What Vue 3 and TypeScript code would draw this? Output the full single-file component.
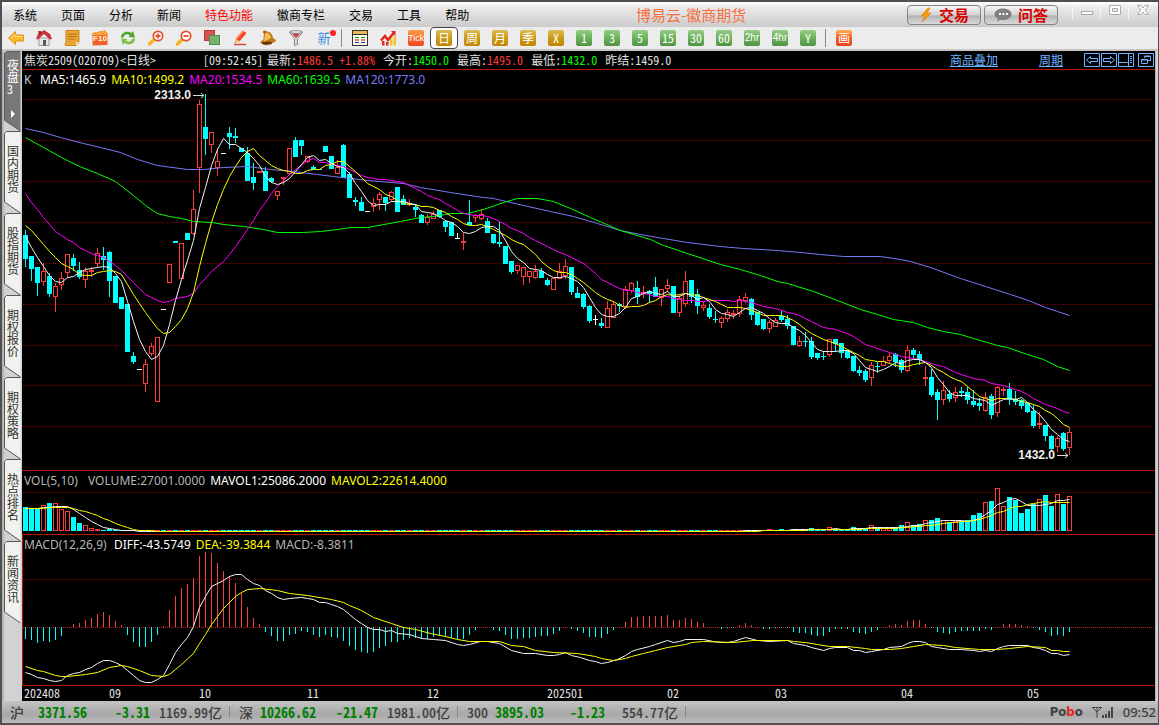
<script setup lang="ts">
type Kind = 'd' | 'u' | 'w'
interface Candle { kind: Kind; x: number; high: number; top: number; bottom: number; low: number; close: number }
interface Quote { label: string; value: string; tone: string }

const LEFT = 22
const WIDTH = 1133
const STEP = 6
const xOf = (i: number): number => 25 + i * STEP

const rawCandles = `d230,235,259,267 d256,256,269,281 d267,267,283,296 u263,271,282,286 d273,276,294,297 u283,286,297,312 u272,278,285,290 u254,254,273,277 d254,258,266,271 d262,270,277,279
u267,271,280,288 u267,270,272,277 u248,253,264,267 d247,256,260,270 d251,252,281,297 d276,276,303,303 d297,297,309,309 d304,304,352,352 d352,356,362,364 w369,369,370,370
u359,364,384,392 u343,346,354,356 u337,337,402,402 w309,309,310,310 u264,264,283,283 d241,241,243,243 u243,243,279,279 d233,233,240,240 u190,209,234,235 u100,104,168,193
d94,127,139,155 u132,132,145,153 u148,161,168,176 w153,153,154,154 d127,133,137,149 d128,136,138,143 d148,148,152,152 d147,153,181,181 d163,177,183,190 u171,171,173,173
d167,171,191,191 d177,178,182,183 u191,191,196,200 u177,177,179,185 u148,148,174,174 d137,140,157,157 d140,140,146,155 u156,156,162,163 d165,167,170,170 d169,169,170,170
d146,146,152,152 d156,156,169,169 u160,167,174,174 d144,145,178,178 d172,174,198,198 d197,200,202,206 d197,202,211,211 w211,211,212,212 u198,203,207,212 u192,194,200,210
d197,197,203,211 u191,192,200,202 d187,187,212,212 d195,199,205,205 u199,203,205,206 d205,207,210,217 d214,215,223,223 u214,217,223,225 u211,214,219,219 d210,210,217,218
d220,221,227,232 d222,222,236,236 w233,238,239,239 u233,241,243,250 d200,222,225,225 u214,215,218,222 u209,214,219,220 d218,221,233,233 d234,234,243,244 d222,242,244,247
d246,246,264,264 d261,261,272,274 u265,265,271,274 u267,267,277,285 u271,271,277,283 u265,271,278,279 d268,271,278,278 d278,280,285,286 u278,278,290,290 u263,271,279,279
u259,266,276,279 d267,267,292,295 d287,293,298,298 d293,294,307,309 d305,306,321,323 w315,319,320,325 d318,323,326,328 u301,308,328,328 u301,304,318,318 d303,304,306,312
u286,289,307,309 u282,283,291,293 d281,288,297,304 u286,292,294,298 d290,291,294,303 d277,287,297,297 u289,289,298,306 u279,285,289,292 d286,286,313,313 u295,298,313,317
u271,281,304,307 d280,280,297,303 d289,294,306,314 u302,305,308,311 d304,308,317,319 d311,319,320,323 u316,318,323,328 u309,312,319,322 u310,313,315,319 u296,299,314,317
u293,297,301,303 d298,299,315,320 d312,312,325,326 d319,319,329,330 u320,322,329,333 u318,320,327,327 d311,316,320,322 d315,319,326,329 d326,326,345,346 u336,341,346,347
d332,341,342,347 d337,341,357,359 d353,353,358,360 d351,356,357,360 u339,339,355,357 d339,339,344,352 d343,343,353,358 d350,350,358,359 d356,356,371,372 d366,370,373,376
d369,371,380,382 u362,365,378,386 d362,366,367,373 u356,361,366,366 u353,356,361,363 d353,354,362,367 d359,360,370,373 u345,350,371,372 d348,350,355,358 d351,354,360,365
u366,377,379,386 d369,377,395,397 d389,392,400,420 u381,390,400,405 d390,394,399,402 u387,392,398,402 d387,391,393,397 d387,392,400,404 d390,401,405,407 d398,403,406,411
u392,397,411,412 d394,396,415,419 u386,387,413,417 u387,389,391,396 d383,389,400,405 d391,399,402,405 d399,400,406,409 d403,403,412,413 d405,411,426,428 u412,423,425,429
d425,425,436,441 d435,436,449,450 u436,438,447,452 d432,433,449,451 u428,432,448,455`

const candles: Candle[] = rawCandles.trim().split(/\s+/).map((t, i) => {
  const kind = t[0] as Kind
  const [high, top, bottom, low] = t.slice(1).split(',').map(Number)
  return { kind, x: xOf(i), high, top, bottom, low, close: kind === 'd' ? bottom : top }
})

function average(values: number[], n: number, lead: number[]): number[] {
  return values.map((_, i) => {
    if (i < n - 1) return lead[i]
    let s = 0
    for (let k = i - n + 1; k <= i; k++) s += values[k]
    return Math.round(s / n)
  })
}
const seriesLine = (v: number[]): string => v.map((y, i) => `${xOf(i) + 0.5},${y + 0.5}`).join(' ')
const tracedLine = (s: string): string =>
  s.trim().split(/\s+/).map((p) => p.split(',').map((n) => Number(n) + 0.5).join(',')).join(' ')

const closes = candles.map((c) => c.close)
const priceLines = [
  { tone: 'ma120', points: tracedLine('25,128 43,132 60,137 83,143 100,147 120,152 137,159 157,165 187,169 203,169 223,167 247,166 270,169 293,171 317,174 333,176 350,178 367,180 403,183 420,187 450,192 483,197 493,198 523,205 550,211 573,216 597,223 620,230 640,234 663,238 687,242 720,246 743,248 777,250 800,252 820,254 843,256 880,256 900,259 910,261 930,267 960,278 985,286 1010,294 1028,300 1045,307 1057,311 1069,315') },
  { tone: 'ma60', points: tracedLine('25,137 43,147 61,157 79,166 97,173 115,181 133,195 145,205 157,213 169,216 181,218 193,221 212,222 223,224 243,226 263,229 277,232 302,232 320,231 337,229 350,227 367,227 400,221 420,217 433,216 450,213 467,213 483,209 503,202 517,198 537,198 553,201 570,208 590,217 620,230 650,239 663,245 687,253 720,264 740,269 760,275 777,281 787,283 813,291 837,300 860,309 877,314 893,319 913,322 927,327 943,331 960,334 973,338 997,345 1007,347 1027,354 1043,359 1057,366 1069,370') },
  { tone: 'ma20', points: seriesLine(average(closes, 20, [193, 202, 209, 217, 224, 231, 235, 239, 242, 247, 250, 253, 255, 257, 261, 265, 270, 276, 282])) },
  { tone: 'ma10', points: seriesLine(average(closes, 10, [225, 230, 237, 244, 251, 257, 263, 266, 269])) },
  { tone: 'ma5', points: seriesLine(average(closes, 5, [236, 247, 257, 266])) },
]
const priceGrid = [99, 140, 181, 222, 263, 304, 345, 385, 426]

const volHead = [507, 509, 509, 505, 503, 503, 509, 511, 517, 523, 525, 528, 529, 530, 529, 530]
const volTail = [529, 530, 529, 530, 529, 529, 530, 528, 529, 529, 527, 529, 529, 529, 527, 528, 528, 525, 528, 528, 528, 527, 525, 522, 525, 524, 520, 520, 518, 520, 522, 521, 521, 520, 515, 513, 502, 501, 488, 506, 497, 500, 513, 509, 504, 499, 495, 506, 494, 504, 496]
const volumeTops = candles.map((_, i) => {
  if (i < volHead.length) return volHead[i]
  if (i >= 124) return volTail[i - 124]
  return i < 118 ? 531 : 530
})
const volumeBars = candles.map((c, i) => ({ kind: c.kind, x: c.x, y: Math.min(530, volumeTops[i]) }))
const volumeLines = [
  { tone: 'ma5', points: seriesLine(average(volumeTops, 5, [508, 508, 508, 507])) },
  { tone: 'ma10', points: seriesLine(average(volumeTops, 10, [508, 508, 508, 508, 507, 507, 507, 507, 508])) },
]

const histogram = [
  639, 640, 643, 641, 642, 640, 636, 627, 624, 623, 620, 618, 614, 612, 615, 621, 625, 635, 642, 647, 647, 642, 635, 626, 610, 596, 588, 584, 578, 556,
  552, 553, 563, 571, 576, 583, 593, 607, 618, 624, 632, 636, 641, 641, 635, 634, 631, 632, 635, 637, 635, 637, 638, 641, 646, 650, 652, 653, 652, 648,
  646, 642, 642, 640, 638, 638, 639, 639, 637, 636, 637, 638, 639, 639, 635, 630, 627, 627, 630, 631, 635, 639, 639, 638, 638, 637, 636, 636, 634, 631,
  627, 629, 631, 633, 637, 637, 638, 634, 630, 627, 622, 617, 617, 616, 616, 616, 616, 615, 620, 620, 618, 619, 622, 623, 627, 627, 629, 628, 628, 625,
  623, 625, 627, 629, 629, 628, 628, 628, 632, 633, 633, 635, 636, 636, 632, 629, 629, 629, 632, 633, 634, 632, 630, 627, 625, 624, 625, 621, 620, 620,
  624, 628, 632, 633, 634, 632, 631, 631, 631, 631, 629, 630, 627, 624, 624, 624, 625, 626, 628, 630, 632, 636, 635, 636, 632,
].map((y, i) => ({ x: xOf(i), y: Math.min(y, 627), h: Math.abs(y - 627), up: y < 627 }))
const macdLines = [
  { tone: 'ma5', points: tracedLine('25,672 31,674 37,677 43,678 49,680 55,681 61,680 67,675 73,673 79,672 85,669 91,667 97,663 103,660 109,660 115,662 121,665 127,670 133,675 139,680 145,682 151,682 157,679 163,675 169,664 175,652 181,644 187,637 193,626 199,607 205,596 211,586 217,583 223,580 229,576 235,574 241,574 247,579 253,583 259,585 265,590 271,593 277,597 283,599 289,598 301,597 307,598 313,599 319,602 325,602 331,604 337,606 343,609 349,614 355,619 361,623 367,627 373,629 379,629 385,631 391,630 397,633 409,634 415,636 421,638 433,639 445,640 457,644 463,645 469,644 480,641 487,641 499,643 511,650 523,653 535,653 547,655 553,655 559,654 565,652 571,655 580,657 589,660 595,661 601,663 607,662 617,659 625,655 631,651 637,649 649,646 655,644 667,640 673,642 679,641 685,639 703,639 713,641 721,642 727,642 733,641 745,637 757,640 769,641 787,640 793,643 805,645 811,647 823,650 829,648 835,647 847,647 853,650 859,650 865,652 871,651 883,649 889,647 901,646 907,643 913,641 919,641 925,642 931,646 937,647 949,649 961,649 973,650 979,651 985,650 991,651 997,648 1003,646 1009,645 1027,645 1033,647 1039,648 1045,650 1051,653 1057,653 1063,655 1069,654') },
  { tone: 'ma10', points: tracedLine('25,666 37,670 43,671 55,675 61,676 67,676 85,674 97,672 109,667 121,665 127,666 139,670 151,675 163,676 169,674 175,669 181,664 193,653 199,643 205,634 211,624 223,608 235,596 241,592 247,589 260,588 277,590 289,593 307,595 331,599 343,602 349,605 361,610 373,617 391,623 403,627 415,629 430,633 445,636 457,639 469,641 499,641 511,645 523,646 535,650 553,652 577,653 595,656 601,658 613,660 625,658 631,656 643,653 655,650 667,647 685,644 691,642 703,641 733,642 753,640 787,640 793,641 805,642 817,644 829,646 847,646 865,648 871,649 889,649 901,648 913,646 925,644 943,645 955,647 979,649 997,649 1009,648 1027,646 1045,647 1051,650 1057,650 1063,651 1069,651') },
]

const tickStarts: [string, number][] = [['202408', 24], ['09', 109], ['10', 199], ['11', 307], ['12', 427], ['202501', 547], ['02', 667], ['03', 775], ['04', 901], ['05', 1027]]
const ticks = tickStarts.map(([label, x], i) => {
  const next = i + 1 < tickStarts.length ? tickStarts[i + 1][1] : LEFT + WIDTH
  return { label, width: `${((next - x) / (WIDTH - 2)) * 100}%` }
})

const menus = ['系统', '页面', '分析', '新闻', '特色功能', '徽商专栏', '交易', '工具', '帮助']
const periods = [
  { t: 'Tick', c: 'tick' }, { t: '日', c: 'gold' }, { t: '周', c: 'gold' }, { t: '月', c: 'gold' }, { t: '季', c: 'gold' }, { t: 'X', c: 'gold' },
  { t: '1', c: 'green' }, { t: '3', c: 'green' }, { t: '5', c: 'green' }, { t: '15', c: 'green' }, { t: '30', c: 'green' }, { t: '60', c: 'green' },
  { t: '2hr', c: 'green small' }, { t: '4hr', c: 'green small' }, { t: 'Y', c: 'green' },
]
const sideTabs = ['夜盘3', '国内期货', '股指期货', '期权报价', '期权策略', '热点排名', '新闻资讯']
const quotes: Quote[] = [
  { label: '今开:', value: '1450.0', tone: 'fall' },
  { label: '最高:', value: '1495.0', tone: 'rise' },
  { label: '最低:', value: '1432.0', tone: 'fall' },
  { label: '昨结:', value: '1459.0', tone: 'flat' },
]
const pct = (v: number, base: number, size: number): string => `${((v - base) / size) * 100}%`
</script>

<template>
  <div class="window">
    <header class="menubar">
      <nav class="menus">
        <button v-for="m in menus" :key="m" type="button" :class="{ hot: m === '特色功能' }">{{ m }}</button>
      </nav>
      <h1>博易云-徽商期货</h1>
      <div class="actions">
        <button type="button" class="pill">
          <svg width="14" height="16" viewBox="0 0 14 16"><path d="M9 1 2 9h4l-3 6 9-9H8l3-5z" fill="#f59a12" stroke="#e07b00" stroke-width=".6" /></svg>
          交易
        </button>
        <button type="button" class="pill">
          <svg width="18" height="14" viewBox="0 0 18 14"><path d="M9 .5c5 0 8.500 2.500 8.500 5.700S14 12 9 12c-1 0-1.600 0-2.500-.2L3 13.500l1-2.800C2 9.700.5 8 .5 6.200.5 3 4 .5 9 .5z" fill="#808080" /><path d="M5 5h2v2H5zM8.500 5h2v2h-2zM12 5h2v2h-2z" fill="#fff" /></svg>
          问答
        </button>
      </div>
      <div class="winctl">
        <button type="button" aria-label="最小化"><svg width="14" height="16"><rect x="1.500" y="8.500" width="11" height="3" fill="#fff" stroke="#aaa" /></svg></button>
        <button type="button" aria-label="最大化"><svg width="14" height="16"><path d="M1.500 2.500h11v9h-11zM4.500 5.500h5v3h-5z" fill="#fff" fill-rule="evenodd" stroke="#aaa" /></svg></button>
        <button type="button" aria-label="关闭"><svg width="14" height="16"><path d="M1.500 2.500h3.500L7 5l2-2.500h3.500L9 7l3.500 4.500H9L7 9l-2 2.500H1.500L5 7z" fill="#fff" stroke="#aaa" /></svg></button>
      </div>
    </header>

    <div class="toolbar">
      <button type="button" aria-label="后退"><svg viewBox="0 0 16 16"><path d="M.5 8 7.500 1.500V5h8v6h-8v3.500z" fill="#fbb829" stroke="#e39412" /><path d="M3 8l4-3.500V6.500h7.500" fill="none" stroke="#ffe08a" /></svg></button>
      <button type="button" aria-label="首页"><svg viewBox="0 0 16 16"><path d="M3 8h10v7.500H3z" fill="#e8e8e8" stroke="#999" /><path d="M0 9 2 4l6-4 6 4 2 5-2 .5L8 4 2 9.500z" fill="#c8323a" /><path d="M2.500 1h2.500v3H2.500z" fill="#922" /><path d="M7 10h3v5.500H7z" fill="#555" /></svg></button>
      <button type="button" aria-label="笔记"><svg viewBox="0 0 16 16"><path d="M2 .5h13V12l-3 3.500H2c-1.500 0-1.500-2.500 0-2.500z" fill="#e8a534" stroke="#c98518" /><path d="M4 4h9M4 6.500h9M4 9h7" stroke="#b87412" /><path d="M15 12h-3v3.500z" fill="#ffe0a0" /></svg></button>
      <button type="button" aria-label="F10"><svg viewBox="0 0 16 16"><path d="M.5 3 13 .5 15.500 3v12L.5 15.500z" fill="#f1612a" /><path d="M.5 3 13 .5 15 3v2H.5z" fill="#f7a23a" /></svg><span class="f10">F10</span></button>
      <button type="button" aria-label="刷新"><svg viewBox="0 0 16 16"><path d="M1 7.500C1 2.500 7 0 11.500 3L13 1l2 6.500-6.500-.5L10 5.200C7.500 3.500 4 4.500 3.500 7.500z" fill="#4da527" /><path d="M15 8.500c0 5-6 7.500-10.500 4.500L3 15 1 8.500l6.500.5L6 10.800c2.500 1.700 6 .7 6.500-2.300z" fill="#7cc243" /></svg></button>
      <button type="button" aria-label="放大"><svg viewBox="0 0 16 16"><path d="M6 9.500 1.500 14" stroke="#f7b51c" stroke-width="3.500" stroke-linecap="round" /><circle cx="10" cy="6" r="4.700" fill="#fff" stroke="#e2502e" stroke-width="1.700" /><path d="M7.500 6h5M10 3.500v5" stroke="#e2502e" stroke-width="1.800" /></svg></button>
      <button type="button" aria-label="缩小"><svg viewBox="0 0 16 16"><path d="M6 9.500 1.500 14" stroke="#f7b51c" stroke-width="3.500" stroke-linecap="round" /><circle cx="10" cy="6" r="4.700" fill="#fff" stroke="#e2502e" stroke-width="1.700" /><path d="M7.500 6h5" stroke="#e2502e" stroke-width="1.800" /></svg></button>
      <button type="button" aria-label="叠加"><svg viewBox="0 0 16 16"><rect x=".5" y=".5" width="10" height="10" fill="#d9504d" stroke="#b93a38" /><rect x="5.500" y="5.500" width="10" height="9" fill="#77b36c" stroke="#528f4a" /></svg></button>
      <button type="button" aria-label="画线"><svg viewBox="0 0 16 16"><path d="M2.500 13 4 9l6.500-8.500L14.500 3 8 11z" fill="#ee4a26" /><path d="M4 9 11 1" stroke="#ff9a77" stroke-width="1.500" /><path d="M2.500 13 4 9l3.500 2z" fill="#f7c77c" /><path d="M2 14.500h12" stroke="#d04a3a" stroke-width="1.500" /></svg></button>
      <button type="button" aria-label="提醒"><svg viewBox="0 0 16 16"><path d="M4 1.500C9 0 13 4 13 8l3 2-1 2-9 3.500-5-2-.5-2 3-2z" fill="#c57a18" /><path d="M5 3c3-1 5 1 6 5l-7 4z" fill="#f3bf58" /><ellipse cx="7" cy="13" rx="5" ry="1.500" fill="#6b3207" /><circle cx="4.500" cy="2" r="1.500" fill="#a55c0e" /></svg></button>
      <button type="button" aria-label="筛选"><svg viewBox="0 0 16 16"><path d="M1.500 2h13L9.500 8.500v6l-3 1v-7z" fill="#ddd" stroke="#888" /><path d="M4 3.500h8L8 8z" fill="#d7323a" /><ellipse cx="8" cy="2" rx="6.500" ry="1.300" fill="#f1f1f1" stroke="#888" /></svg></button>
      <button type="button" class="new">新<i></i></button>
      <span class="sep"></span>
      <button type="button" aria-label="报价"><svg viewBox="0 0 16 16"><rect x=".5" y=".5" width="15" height="15" fill="#fffef0" stroke="#333" /><path d="M1 1h14v3H1z" fill="#e8bb50" /><path d="M1 4.500h14" stroke="#333" /><path d="M3 7.500h4" stroke="#090" /><path d="M9 7.500h4" stroke="#090" /><path d="M3 10h4" stroke="#c00" /><path d="M9 10h4" stroke="#c00" /><path d="M3 12.500h4M9 12.500h4" stroke="#22c" /></svg></button>
      <button type="button" aria-label="走势"><svg viewBox="0 0 16 16"><path d="M2 11h2.500v4.500H2zM6 12h2.500v3.500H6z" fill="#e22b20" /><path d="M10 9h2.500v6.500H10zM13.500 6H16v9.500h-2.500z" fill="#f6c12c" /><path d="M1 10.500 5 6l3 4 6.500-8" fill="none" stroke="#e1251b" stroke-width="2.500" /><path d="M11 1h4.500v5z" fill="#e1251b" /></svg></button>
      <button v-for="p in periods" :key="p.t" type="button" :class="{ on: p.t === '日' }"><span class="chip" :class="p.c">{{ p.t }}</span></button>
      <span class="sep"></span>
      <button type="button"><span class="chip draw">画</span></button>
    </div>

    <div class="body">
      <nav class="side">
        <button v-for="(s, i) in sideTabs" :key="s" type="button" :class="{ active: i === 0 }">
          <svg viewBox="0 0 17 82" preserveAspectRatio="none"><path d="M16.500.5h-14l-2 2V71l16 11" /></svg>
          <span>{{ s }}</span>
          <b v-if="i === 0"></b>
        </button>
      </nav>

      <main class="board">
        <div class="infobar">
          <span class="name">焦炭2509(020709)&lt;日线&gt;</span>
          <span class="time">[09:52:45]</span>
          <span class="last">最新:<em class="rise">1486.5&nbsp;+1.88%</em></span>
          <span v-for="q in quotes" :key="q.label">{{ q.label }}<em :class="q.tone">{{ q.value }}</em></span>
          <span class="links">
            <a href="#overlay">商品叠加</a>
            <a href="#period">周期</a>
          </span>
          <span class="tools">
            <button type="button" aria-label="左移"><svg viewBox="0 0 16 14"><path d="M.5.5h15v13H.5zM2.500 7 6.500 3.500v2h7v3h-7v2z" /></svg></button>
            <button type="button" aria-label="右移"><svg viewBox="0 0 16 14"><path d="M.5.5h15v13H.5zM13.500 7 9.500 3.500v2h-7v3h7v2z" /></svg></button>
            <button type="button" aria-label="侧栏"><svg viewBox="0 0 16 14"><path d="M.5.5h15v13H.5zM.500 9.500h9M10.500 1v12M12 3.500h2M12 5.500h2M12 7.500h2M12 9.500h2" /></svg></button>
            <button type="button" class="restore" aria-label="还原"><svg viewBox="0 0 16 14"><path d="M.5.5h15v13H.5zM6.500 5V3.500h6v4H10M6.500 3h6M3.500 6.500h6v4h-6zM3.500 7h6" /></svg></button>
          </span>
        </div>

        <section class="panel price">
          <svg class="plot" viewBox="22 70 1133 400" preserveAspectRatio="none">
            <line v-for="y in priceGrid" :key="y" class="grid" x1="22" x2="1155" :y1="y + 0.5" :y2="y + 0.5" />
            <g v-for="c in candles" :key="c.x" :class="c.kind">
              <rect v-if="c.low > c.high" :x="c.x" :y="c.high" width="1" :height="c.low - c.high" />
              <rect :x="c.x - 2" :y="c.top" width="5" :height="c.bottom - c.top" />
              <rect v-if="c.kind === 'u' && c.bottom - c.top > 2" class="hole" :x="c.x - 1" :y="c.top + 1" width="3" :height="c.bottom - c.top - 2" />
            </g>
            <polyline v-for="l in priceLines" :key="l.tone" :class="l.tone" :points="l.points" />
          </svg>
          <p class="legend">
            <span class="key">K</span><span class="white">MA5:1465.9</span><span class="yellow">MA10:1499.2</span><span class="magenta">MA20:1534.5</span><span class="lime">MA60:1639.5</span><span class="blue">MA120:1773.0</span>
          </p>
          <span class="mark" :style="{ right: pct(1155, 205, 1133), top: pct(95, 70, 400) }">2313.0<svg width="12" height="7"><path d="M0 3.500h11M8 1l3 2.500L8 6" /></svg></span>
          <span class="mark" :style="{ right: pct(1155, 1069, 1133), top: pct(455, 70, 400) }">1432.0<svg width="12" height="7"><path d="M0 3.500h11M8 1l3 2.500L8 6" /></svg></span>
        </section>

        <section class="panel volume">
          <svg class="plot" viewBox="22 471 1133 63" preserveAspectRatio="none">
            <line class="grid" x1="22" x2="1155" y1="492.500" y2="492.500" />
            <g v-for="b in volumeBars" :key="b.x" :class="b.kind === 'u' ? 'u' : 'd'">
              <rect :x="b.x - 2" :y="b.y" width="5" :height="531 - b.y" />
              <rect v-if="b.kind === 'u' && b.y < 529" class="hole" :x="b.x - 1" :y="b.y + 1" width="3" :height="529 - b.y" />
            </g>
            <polyline v-for="l in volumeLines" :key="l.tone" :class="l.tone" :points="l.points" />
          </svg>
          <p class="legend"><span class="dim">VOL(5,10)</span><span class="dim">VOLUME:27001.0000</span><span class="white">MAVOL1:25086.2000</span><span class="yellow">MAVOL2:22614.4000</span></p>
        </section>

        <section class="panel macd">
          <svg class="plot" viewBox="22 535 1133 150" preserveAspectRatio="none">
            <line class="grid" x1="22" x2="1155" y1="579.500" y2="579.500" />
            <line class="grid zero" x1="22" x2="1155" y1="627.500" y2="627.500" />
            <rect v-for="h in histogram" :key="h.x" :class="h.up ? 'rose' : 'cyan'" :x="h.x" :y="h.y" width="1" :height="h.h" />
            <polyline v-for="l in macdLines" :key="l.tone" :class="l.tone" :points="l.points" />
          </svg>
          <p class="legend"><span class="dim">MACD(12,26,9)</span><span class="white">DIFF:-43.5749</span><span class="yellow">DEA:-39.3844</span><span class="dim">MACD:-8.3811</span></p>
        </section>

        <div class="axis"><span v-for="t in ticks" :key="t.label" :style="{ width: t.width }">{{ t.label }}</span></div>
      </main>
    </div>

    <footer class="status">
      <div class="index"><span>沪</span><b class="w1">3371.56</b><b class="w2">-3.31</b><span>1169.99亿</span></div>
      <div class="index"><span>深</span><b class="w1">10266.62</b><b class="w2">-21.47</b><span>1981.00亿</span></div>
      <div class="index"><span>300</span><b class="w1">3895.03</b><b class="w2">-1.23</b><span>554.77亿</span></div>
      <div class="tray">
        <strong>Po<i>b</i>o</strong>
        <svg width="22" height="13"><path d="M0 1.500h10M1 2l4 4 4-4M5 1v11" /><path d="M10 9h2v3h-2zM13 8h2v4h-2zM16 5h2v7h-2zM19 1h2v11h-2z" class="bars" /></svg>
        <time>09:52</time>
      </div>
    </footer>
  </div>
</template>

<style>
html, body { margin: 0; height: 100%; background: #c8c8c8; }
</style>

<style scoped>
* { box-sizing: border-box; }
button { margin: 0; padding: 0; border: 0; background: none; font: inherit; color: inherit; cursor: pointer; }
em, i { font-style: normal; }
.window { min-height: 100vh; display: flex; flex-direction: column; border: 2px solid #505050; border-right-width: 1px; background: #d4d4d4; color: #000; font: 12px/16px "Noto Sans CJK SC", sans-serif; }

.menubar { display: flex; align-items: center; height: 25px; padding-left: 11px; background: linear-gradient(#fff, #ebebeb 20%, #cbcbcb); }
.menus { display: flex; gap: 24px; flex: none; }
.menus button { white-space: nowrap; }
.menus .hot { color: #f00; }
h1 { flex: 1; margin: 0 0 0 6px; text-align: center; font-size: 15px; font-weight: 400; line-height: 20px; color: #f5703c; }
.actions { display: flex; gap: 3px; flex: none; }
.pill { display: flex; align-items: center; justify-content: center; gap: 6px; width: 74px; height: 20px; border: 1px solid #858585; border-radius: 4px; background: linear-gradient(#f6f6f6, #d2d2d2 50%, #b4b4b4 55%, #d8d8d8); color: #d80000; font-size: 15px; font-weight: 700; line-height: 18px; white-space: nowrap; }
.winctl { display: flex; flex: none; align-self: flex-start; margin: 1px 2px 0 14px; }
.winctl button { width: 28px; height: 16px; border-left: 1px solid #f6f6f6; }
.winctl svg { display: block; margin: 0 auto; }

.toolbar { display: flex; align-items: center; height: 22px; background: #ececec; }
.toolbar button { position: relative; display: flex; align-items: center; justify-content: center; flex: none; width: 28px; height: 22px; }
.toolbar svg { width: 16px; height: 16px; }
.f10 { position: absolute; left: 6px; right: 6px; top: 6px; text-align: center; color: #fff8d0; font: bold 8px/12px "Liberation Sans", sans-serif; }
.toolbar .new { color: #3d8fe0; font-size: 13px; }
.new i { position: absolute; right: 2px; top: 3px; width: 6px; height: 6px; border-radius: 50%; background: #f22; }
.sep { flex: none; width: 8px; height: 18px; background: linear-gradient(#888, #888) 3px 0 / 1px 100% no-repeat; }
.toolbar .on { border: 1px solid #444; border-radius: 4px; background: #fff; }
.chip { width: 16px; height: 16px; border-radius: 2px; color: #fff; font-size: 12px; line-height: 16px; text-align: center; font-feature-settings: "hwid"; }
.gold { background: linear-gradient(#dcbc58, #cb9a18 50%, #bf8600); }
.green { background: linear-gradient(#94cd84, #6db15c 50%, #509343); }
.tick { background: linear-gradient(#fb9b45, #ef4423); font: 9px/16px "Liberation Sans", sans-serif; }
.small { font: 10px/16px "Liberation Sans", sans-serif; }
.draw { background: linear-gradient(#fdb050, #f0501e 60%, #e8441a); }

.body { flex: 1; display: flex; min-height: 0; border-top: 2px solid #c8c4c4; }
.side { flex: none; width: 20px; padding: 0 1px 0 2px; background: linear-gradient(90deg, #a9a9ad, #d2d2d2 3px, #d2d2d2); }
.side button { position: relative; display: flex; flex-direction: column; align-items: flex-start; justify-content: flex-start; width: 17px; height: 82px; padding: 14px 2px 0 3px; color: #333; line-height: 12px; }
.side svg { position: absolute; inset: 0; width: 17px; height: 82px; fill: #f1f1ed; stroke: #555; }
.side span { position: relative; display: block; width: 12px; word-break: break-all; text-align: left; font-feature-settings: "hwid"; }
.side .active { height: 80px; padding-top: 8px; color: #fff; }
.side .active svg { height: 80px; fill: #787878; }
.side b { position: relative; display: block; width: 0; margin: 15px 0 0 4px; border-left: 4px solid #fff; border-top: 4px solid transparent; border-bottom: 4px solid transparent; }

.board { flex: 1; min-width: 0; display: flex; flex-direction: column; margin-right: 2px; border-right: 1px solid #b8b0b0; background: #000; color: #e0e0e0; }
.infobar { display: flex; gap: 8px; align-items: center; height: 19px; padding: 0 1px 0 2px; border-bottom: 1px solid #b41400; white-space: nowrap; font-feature-settings: "hwid"; }
.name { margin-right: 39px; }
.time { margin-right: -4px; }
.rise { color: #ff3c3c; }
.fall { color: #0f0; }
.links { display: flex; gap: 41px; margin-left: auto; margin-right: 13px; }
.links a { color: #70b4ff; }
.tools { display: flex; gap: 1px; }
.tools svg { display: block; width: 16px; height: 14px; fill: none; stroke: #70b4ff; }
.restore { margin-left: 3px; }

.panel { position: relative; border-bottom: 1px solid #b41400; }
.price { flex: 400 1 0; }
.volume { flex: 63 1 0; }
.macd { flex: 150 1 0; border-left: 1px solid #b41400; }
.plot { position: absolute; inset: 0; width: 100%; height: 100%; }
.macd .plot { left: -1px; width: calc(100% + 1px); }
.legend { position: relative; display: flex; gap: 5px; margin: 0; padding: 1px 0 0 2px; font: 12px/18px "Noto Sans", sans-serif; white-space: nowrap; }
.macd .legend { padding-left: 1px; }
.volume .legend span:first-child { min-width: 59px; }
.macd .legend span:first-child { min-width: 85px; }
.key { width: 11px; color: #c8c8d8; }
.dim { color: #b4b4b4; }
.white { color: #fff; }
.yellow { color: #ff0; }
.magenta { color: #f0f; }
.lime { color: #0f0; }
.blue { color: #7878f8; }
.grid { stroke: #800000; stroke-dasharray: 1 1; stroke-dashoffset: 1; }
.zero { stroke: #b02020; }
.d rect, .cyan { fill: #0ff; }
.u rect, .rose { fill: #ff3c3c; }
.w rect { fill: #fff; }
.u .hole { fill: #000; }
polyline { fill: none; stroke-width: 1; }
.ma5 { stroke: #f4f4f4; }
.ma10 { stroke: #ff0; }
.ma20 { stroke: #f0f; }
.ma60 { stroke: #0f0; }
.ma120 { stroke: #7878f8; }
.mark { position: absolute; display: flex; align-items: center; gap: 2px; height: 14px; margin-top: -7px; color: #f0f0f0; font: bold 12px/14px "Liberation Sans", sans-serif; }
.mark svg { fill: none; stroke: #ddd; }
.axis { display: flex; height: 15px; padding-left: 2px; line-height: 14px; font-feature-settings: "hwid"; }
.axis span { flex: none; }

.status { display: flex; align-items: center; height: 22px; padding-left: 8px; background: linear-gradient(#c4c4c4, #a8a8a8 60%, #bcbcbc); color: #404040; font-size: 14px; font-weight: 500; line-height: 20px; font-feature-settings: "hwid"; white-space: nowrap; }
.index { display: flex; align-items: center; padding-right: 7px; margin-right: 9px; border-right: 1px solid #888; line-height: 12px; }
.index b { color: #008000; font-weight: 700; }
.w1 { width: 63px; margin-left: 7px; }
.w2 { width: 64px; text-align: right; padding-right: 9px; }
.index:first-child .w1 { margin-left: 14px; }
.index:first-child .w2 { width: 58px; }
.index:nth-child(3) .w2 { padding-right: 17px; }
.tray { display: flex; align-items: center; margin-left: auto; padding-right: 2px; gap: 9px; font-family: "Noto Sans", sans-serif; font-size: 13px; }
.tray strong { font: bold 13px/18px "DejaVu Sans Condensed", "DejaVu Sans", sans-serif; }
.tray i { color: #f02020; }
.tray svg { fill: none; stroke: #444; }
.tray .bars { fill: #444; stroke: none; }
</style>
